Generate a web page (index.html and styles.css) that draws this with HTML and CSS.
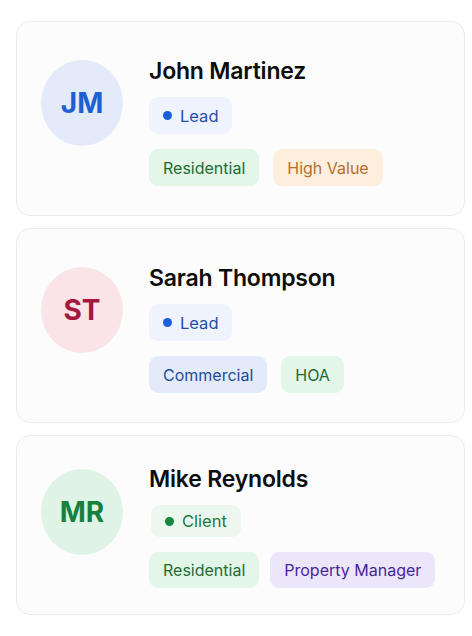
FILE: index.html
```html
<!DOCTYPE html>
<html lang="en">
<head>
    <meta charset="UTF-8">
    <meta name="viewport" content="width=device-width, initial-scale=1.0">
    <title>Contacts</title>
    <link rel="stylesheet" href="styles.css">
</head>
<body>

<div class="contact-list">
    <div class="contact-card">
        <div class="avatar avatar-blue">JM</div>
        <div class="contact-info">
            <h2>John Martinez</h2>
            <div class="status status-lead"><span class="dot"></span>Lead</div>
            <div class="tags">
                <span class="tag tag-green">Residential</span>
                <span class="tag tag-orange">High Value</span>
            </div>
        </div>
    </div>

    <div class="contact-card">
        <div class="avatar avatar-red">ST</div>
        <div class="contact-info">
            <h2>Sarah Thompson</h2>
            <div class="status status-lead"><span class="dot"></span>Lead</div>
            <div class="tags">
                <span class="tag tag-blue">Commercial</span>
                <span class="tag tag-green">HOA</span>
            </div>
        </div>
    </div>

    <div class="contact-card compact">
        <div class="avatar avatar-green">MR</div>
        <div class="contact-info">
            <h2>Mike Reynolds</h2>
            <div class="status status-client"><span class="dot"></span>Client</div>
            <div class="tags">
                <span class="tag tag-green">Residential</span>
                <span class="tag tag-purple">Property Manager</span>
            </div>
        </div>
    </div>
</div>

</body>
</html>
```

FILE: styles.css
```css
body {
    font-family: Inter, "Noto Sans", Arial, sans-serif;
    background-color: #ffffff;
    margin: 0;
    padding: 0;
}
.contact-list {
    display: flex;
    flex-direction: column;
    gap: 12px;
    width: 449px;
    padding: 21px 0 0 16px;
}
.contact-card {
    display: flex;
    align-items: flex-start;
    gap: 26px;
    background-color: #fcfcfd;
    border: 1px solid #ebebef;
    border-radius: 14px;
    padding: 34px 24px 29px 24px;
}
.avatar {
    flex: none;
    width: 82px;
    height: 86px;
    margin-top: 4px;
    border-radius: 50%;
    display: flex;
    align-items: center;
    justify-content: center;
    font-size: 28px;
    font-weight: 700;
}
.avatar-blue {
    background-color: #e3ebfb;
    color: #1f5fd1;
}
.avatar-red {
    background-color: #fbe4e8;
    color: #a5173c;
}
.avatar-green {
    background-color: #dff4e6;
    color: #18803f;
}
.contact-info h2 {
    margin: 0 0 11px 0;
    font-size: 23px;
    line-height: 30px;
    font-weight: 600;
    letter-spacing: -0.2px;
    color: #0d0d0d;
}
.status {
    display: inline-flex;
    align-items: center;
    gap: 8px;
    height: 37px;
    padding: 0 14px 0 14px;
    border-radius: 9px;
    font-size: 16.5px;
    box-sizing: border-box;
}
.status .dot {
    width: 9px;
    height: 9px;
    border-radius: 50%;
}
.status-lead {
    background-color: #eef3fd;
    color: #1f4fa6;
}
.status-lead .dot {
    background-color: #1a5fe0;
}
.status-client {
    background-color: #ecf8ef;
    color: #1b7a3d;
    margin-left: 2px;
}
.status-client .dot {
    background-color: #16873f;
}
.tags {
    display: flex;
    gap: 14px;
    margin-top: 15px;
}
.tag {
    flex: none;
    display: inline-flex;
    align-items: center;
    height: 37px;
    padding: 0 14px;
    border-radius: 9px;
    font-size: 16px;
    white-space: nowrap;
    box-sizing: border-box;
}
.compact {
    padding-top: 28px;
    padding-bottom: 26px;
}
.compact .avatar {
    margin-top: 5px;
}
.compact .status {
    height: 32px;
}
.compact .tags {
    gap: 11px;
}
.compact .tag {
    height: 36px;
}
.tag-green {
    background-color: #e3f6e8;
    color: #226b32;
}
.tag-orange {
    background-color: #fdeedd;
    color: #b56e2b;
}
.tag-blue {
    background-color: #e3ebfb;
    color: #1f4a98;
}
.tag-purple {
    background-color: #ece6fb;
    color: #45269a;
}
```
